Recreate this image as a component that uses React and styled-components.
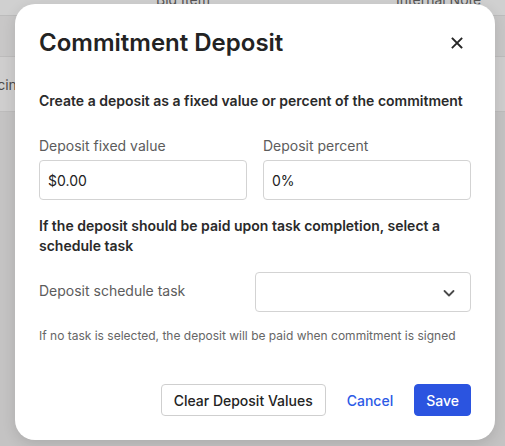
import React from "react";
import styled, { createGlobalStyle } from "styled-components";

const GlobalStyle = createGlobalStyle`
  * {
    box-sizing: border-box;
  }
  body {
    margin: 0;
    font-family: "Inter", "Noto Sans", sans-serif;
    -webkit-font-smoothing: antialiased;
  }
`;

const ChevronDown = () => (
  <svg width="14" height="14" viewBox="0 0 14 14" fill="none">
    <path
      d="M2.5 5 L7 9.5 L11.5 5"
      stroke="#4a4a4a"
      strokeWidth="1.8"
      strokeLinecap="round"
      strokeLinejoin="round"
    />
  </svg>
);

const CloseIcon = () => (
  <svg width="14" height="14" viewBox="0 0 14 14" fill="none">
    <path
      d="M2.5 2.5 L11.5 11.5 M11.5 2.5 L2.5 11.5"
      stroke="#262626"
      strokeWidth="1.8"
      strokeLinecap="square"
    />
  </svg>
);

const App = () => {
  return (
    <Page>
      <GlobalStyle />
      <Table>
        <HeaderRow>
          <HeaderCell $width={140} />
          <HeaderCell $width={240}>Bid Item</HeaderCell>
          <HeaderCell $width={125}>Internal Note</HeaderCell>
        </HeaderRow>
        <Row $height={41} $shade="#c8c7c7" />
        <Row $height={55} $shade="#cfcece">
          <RowText>Fencing</RowText>
        </Row>
      </Table>

      <Modal>
        <ModalHeader>
          <Title>Commitment Deposit</Title>
          <CloseButton type="button" aria-label="Close">
            <CloseIcon />
          </CloseButton>
        </ModalHeader>

        <ModalBody>
          <Lead>Create a deposit as a fixed value or percent of the commitment</Lead>

          <FieldGrid>
            <Field>
              <Label>Deposit fixed value</Label>
              <Input defaultValue="$0.00" />
            </Field>
            <Field>
              <Label>Deposit percent</Label>
              <Input defaultValue="0%" />
            </Field>
          </FieldGrid>

          <Lead $spaced>
            If the deposit should be paid upon task completion, select a
            schedule task
          </Lead>

          <ScheduleRow>
            <Label>Deposit schedule task</Label>
            <Select>
              <ChevronDown />
            </Select>
          </ScheduleRow>

          <Hint>
            If no task is selected, the deposit will be paid when commitment is
            signed
          </Hint>
        </ModalBody>

        <Footer>
          <Button $variant="outline">Clear Deposit Values</Button>
          <Button $variant="link">Cancel</Button>
          <Button $variant="primary">Save</Button>
        </Footer>
      </Modal>
    </Page>
  );
};

export default App;

const Page = styled.div`
  position: relative;
  width: 505px;
  height: 446px;
  overflow: hidden;
  background: #c4c3c3;
`;

const Table = styled.div`
  display: flex;
  flex-direction: column;
  margin-top: -10px;
`;

const HeaderRow = styled.div`
  display: flex;
  height: 26px;
  background: #d0d0d0;
  border-bottom: 1px solid #bcbcbc;
  color: #555;
  font-size: 14px;
`;

const HeaderCell = styled.div`
  width: ${(p) => p.$width}px;
  padding-left: 16px;
  line-height: 20px;
  white-space: nowrap;
`;

const Row = styled.div`
  display: flex;
  align-items: center;
  height: ${(p) => p.$height}px;
  background: ${(p) => p.$shade};
  border-bottom: 1px solid #bdbcbc;
`;

const RowText = styled.span`
  margin-left: -27px;
  font-size: 14px;
  color: #4a4a4a;
`;

const Modal = styled.div`
  position: absolute;
  left: 15px;
  top: 4px;
  width: 480px;
  height: 436px;
  display: flex;
  flex-direction: column;
  background: #fff;
  border-radius: 20px;
  box-shadow: 0 4px 14px rgba(0, 0, 0, 0.12);
`;

const ModalHeader = styled.div`
  display: flex;
  align-items: center;
  justify-content: space-between;
  padding: 23px 24px 0;
`;

const Title = styled.h2`
  margin: 0;
  font-size: 24px;
  line-height: 32px;
  font-weight: 600;
  color: #232323;
`;

const CloseButton = styled.button`
  display: flex;
  align-items: center;
  justify-content: center;
  width: 24px;
  height: 24px;
  margin-right: 2px;
  padding: 0;
  border: none;
  background: none;
  cursor: pointer;
`;

const ModalBody = styled.div`
  flex: 1;
  padding: 32px 24px 0;
`;

const Lead = styled.p`
  margin: ${(p) => (p.$spaced ? "16px 0 0" : "0")};
  font-size: 14px;
  line-height: 20px;
  font-weight: 600;
  color: #2a2a2a;
`;

const FieldGrid = styled.div`
  display: grid;
  grid-template-columns: minmax(0, 1fr) minmax(0, 1fr);
  gap: 16px;
  margin-top: 25px;
`;

const Field = styled.div`
  display: flex;
  flex-direction: column;
  gap: 4px;
  min-width: 0;
`;

const Label = styled.label`
  font-size: 14px;
  line-height: 20px;
  color: #5c5c5c;
`;

const Input = styled.input`
  width: 100%;
  min-width: 0;
  height: 40px;
  padding: 0 8px;
  border: 1px solid #d3d3d3;
  border-radius: 4px;
  font-family: inherit;
  font-size: 14px;
  color: #222;
  outline: none;
`;

const ScheduleRow = styled.div`
  display: grid;
  grid-template-columns: minmax(0, 1fr) minmax(0, 1fr);
  align-items: center;
  margin-top: 16px;

  label {
    margin-top: -3px;
  }
`;

const Select = styled.div`
  display: flex;
  align-items: center;
  justify-content: flex-end;
  height: 40px;
  padding: 2px 14px 0;
  border: 1px solid #d3d3d3;
  border-radius: 4px;
`;

const Hint = styled.p`
  margin: 16px 0 0;
  font-size: 12px;
  line-height: 16px;
  color: #666;
`;

const Footer = styled.div`
  display: flex;
  justify-content: flex-end;
  align-items: center;
  gap: 8px;
  padding: 0 24px 24px;
`;

const Button = styled.button`
  height: 32px;
  padding: 0 ${(p) => (p.$variant === "outline" ? 12 : p.$variant === "link" ? 12 : 11)}px;
  border-radius: 4px;
  font-family: inherit;
  font-size: 14px;
  font-weight: 500;
  cursor: pointer;
  border: 1px solid
    ${(p) =>
      p.$variant === "outline"
        ? "#cfcfcf"
        : p.$variant === "primary"
        ? "#2b54e0"
        : "transparent"};
  background: ${(p) => (p.$variant === "primary" ? "#2b54e0" : "#fff")};
  color: ${(p) =>
    p.$variant === "primary"
      ? "#fff"
      : p.$variant === "link"
      ? "#2c5ae6"
      : "#232323"};
`;
